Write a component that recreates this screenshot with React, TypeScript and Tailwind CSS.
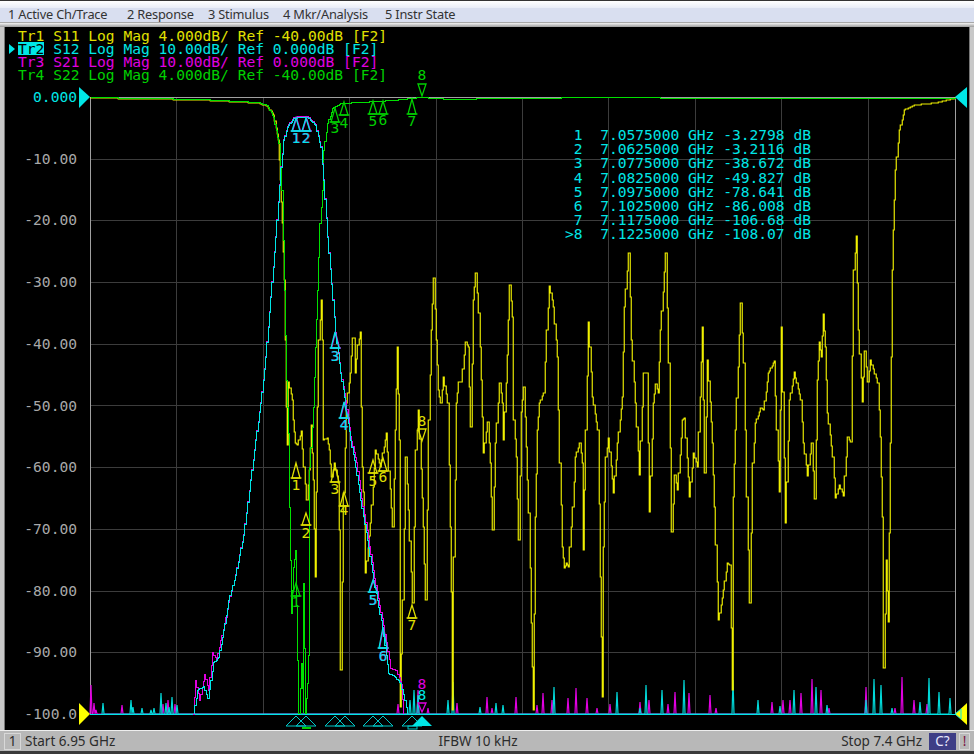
import React from "react";

type Pt = [number, number];

const GRID_X = [176, 263, 349, 436, 522, 608, 695, 781, 868];
const GRID_Y = [159, 220, 282, 344, 405, 467, 529, 591, 652];
const AXIS = ["0.000", "-10.00", "-20.00", "-30.00", "-40.00", "-50.00", "-60.00", "-70.00", "-80.00", "-90.00", "-100.0"];
const MENU = [
  { label: "1 Active Ch/Trace", cls: "w-[119px]" },
  { label: "2 Response", cls: "w-[81px]" },
  { label: "3 Stimulus", cls: "w-[75px]" },
  { label: "4 Mkr/Analysis", cls: "w-[102px]" },
  { label: "5 Instr State", cls: "w-[80px]" },
];

const LEGEND = [
  { text: "Tr1 S11 Log Mag 4.000dB/ Ref -40.00dB [F2]", cls: "text-[#e0e000]" },
  { text: "Tr2 S12 Log Mag 10.00dB/ Ref 0.000dB [F2]", cls: "text-[#00e6e6]", active: true },
  { text: "Tr3 S21 Log Mag 10.00dB/ Ref 0.000dB [F2]", cls: "text-[#e000e0]" },
  { text: "Tr4 S22 Log Mag 4.000dB/ Ref -40.00dB [F2]", cls: "text-[#00d000]" },
];

const TABLE = [
  " 1  7.0575000 GHz -3.2798 dB",
  " 2  7.0625000 GHz -3.2116 dB",
  " 3  7.0775000 GHz -38.672 dB",
  " 4  7.0825000 GHz -49.827 dB",
  " 5  7.0975000 GHz -78.641 dB",
  " 6  7.1025000 GHz -86.008 dB",
  " 7  7.1175000 GHz -106.68 dB",
  ">8  7.1225000 GHz -108.07 dB",
];

const S11: Pt[] = [
  [90, 98], [200, 100], [257, 103], [267, 106], [273, 115], [278, 140], [280, 180], [282, 223], [284, 280], [285, 340], [286, 407], [287, 445],
  [288, 382], [292, 400], [293, 420], [295, 443], [297, 445], [301, 431], [303, 467], [306, 500], [309, 470], [311, 425], [313, 480], [315, 577],
  [317, 407], [318, 340], [321, 300], [322, 340], [323, 407], [323, 440], [327, 438], [329, 450], [331, 477], [334, 463], [338, 483], [339, 530], [340, 670],
  [343, 493], [346, 403], [350, 373], [352, 338], [354, 338], [355, 373], [357, 345], [360, 332], [361, 407], [362, 467], [364, 517], [365, 573],
  [370, 523], [375, 450], [380, 467], [386, 433], [392, 527], [395, 430], [397, 347], [399, 440], [400, 533], [400, 707], [402, 600], [405, 457], [408, 510],
  [412, 603], [415, 450], [418, 410], [423, 527], [425, 600], [428, 420], [431, 330], [433, 278], [436, 340], [438, 390], [440, 403], [443, 377], [447, 403],
  [450, 527], [452, 657], [452, 710], [453, 557], [456, 403], [458, 382], [461, 382], [465, 342], [468, 347], [470, 427], [473, 300], [475, 273],
  [478, 313], [481, 380], [483, 453], [487, 422], [490, 463], [492, 530], [495, 443], [499, 383], [502, 403], [503, 440], [507, 355], [509, 285],
  [512, 317], [513, 420], [516, 457], [518, 540], [521, 412], [523, 387], [526, 447], [528, 513], [531, 623], [533, 710], [535, 517], [537, 430],
  [539, 403], [543, 393], [546, 330], [549, 286], [553, 307], [557, 357], [559, 463], [562, 547], [564, 568], [566, 563], [568, 567], [572, 507],
  [575, 457], [579, 443], [582, 463], [583, 550], [585, 430], [588, 322], [592, 397], [597, 430], [600, 577], [602, 697], [603, 547], [605, 457],
  [608, 438], [613, 493], [617, 443], [622, 397], [624, 307], [628, 253], [631, 340], [635, 403], [639, 475], [643, 373], [646, 373], [649, 512],
  [653, 403], [655, 384], [658, 393], [660, 330], [665, 253], [668, 363], [671, 532], [674, 475], [677, 490], [682, 420], [684, 418], [689, 497],
  [693, 453], [697, 467], [702, 327], [704, 473], [707, 360], [712, 443], [714, 507], [718, 620], [723, 590], [727, 563], [729, 565], [732, 690],
  [733, 497], [735, 430], [740, 303], [743, 363], [746, 497], [749, 603], [752, 463], [755, 423], [760, 408], [763, 410], [768, 373], [774, 361],
  [776, 430], [779, 492], [781, 327], [785, 523], [789, 400], [794, 372], [800, 400], [803, 443], [807, 476], [811, 443], [814, 499], [817, 380],
  [819, 342], [821, 357], [823, 314], [825, 347], [827, 413], [832, 457], [835, 498], [839, 485], [843, 496], [847, 437], [850, 442], [853, 270],
  [856, 236], [858, 330], [862, 402], [864, 351], [867, 382], [870, 360], [877, 383], [880, 437], [882, 517], [883, 668], [886, 560], [888, 622],
  [890, 443], [892, 270], [893, 230], [895, 170], [899, 130], [904, 110], [914, 105], [935, 103], [955, 98],
];

const S22: Pt[] = [
  [90, 97], [200, 99], [257, 102], [267, 105], [273, 117], [278, 143], [281, 190], [284, 290], [286, 380], [288, 433], [289, 507], [291, 613], [293, 567], [295, 550],
  [297, 660], [298, 713], [301, 663], [303, 713], [303, 583], [305, 713], [307, 683], [309, 627], [309, 467], [313, 407], [315, 347], [317, 290],
  [319, 223], [322, 190], [323, 150], [327, 123], [332, 108], [340, 103], [360, 102], [393, 100], [420, 97], [450, 99], [500, 98], [620, 97], [700, 98], [955, 98],
];

const S12: Pt[] = [
  [193, 713], [197, 690], [203, 686], [207, 698], [210, 680], [213, 662], [218, 657], [223, 630], [228, 600], [235, 575], [243, 535], [250, 480], [255, 440],
  [260, 403], [265, 357], [270, 297], [275, 237], [280, 167], [283, 140], [287, 127], [293, 118], [300, 117], [307, 117], [315, 125], [320, 147], [323, 180],
  [327, 237], [332, 300], [335, 333], [340, 373], [345, 405], [350, 440], [355, 467], [360, 500], [367, 540], [373, 580], [382, 627], [388, 673], [394, 676],
  [400, 683], [404, 700], [407, 714],
];

const S21: Pt[] = [
  [192, 714], [195, 680], [199, 700], [204, 674], [208, 690], [212, 652], [216, 660], [220, 640], [224, 624], [228, 602], [235, 574], [243, 534], [250, 479], [255, 439],
  [260, 402], [265, 356], [270, 296], [275, 236], [280, 166], [283, 139], [287, 126], [293, 117], [300, 116], [307, 116], [315, 124], [320, 146], [323, 179],
  [327, 236], [332, 299], [335, 332], [340, 372], [345, 400], [350, 436], [356, 462], [361, 498], [368, 538], [374, 578], [383, 625], [390, 668], [396, 670],
  [401, 684], [403, 714],
];

const CYAN_SPIKES: Pt[] = [
  [103, 703], [131, 700], [133, 707], [142, 708], [151, 710], [154, 708], [161, 693], [166, 703], [169, 707], [172, 697], [177, 705], [410, 700], [414, 690], [418, 695],
  [448, 700], [453, 682], [480, 707], [496, 703], [503, 705], [554, 687], [617, 692], [640, 708], [646, 685], [662, 690], [684, 680], [733, 680], [758, 700], [780, 706],
  [794, 690], [816, 687], [827, 705], [866, 700], [874, 679], [881, 685], [892, 708], [920, 702], [929, 678], [939, 692], [950, 698],
];

const MAGENTA_SPIKES: Pt[] = [
  [91, 685], [94, 703], [96, 710], [122, 705], [163, 704], [168, 700], [175, 704], [398, 704], [418, 690], [428, 708], [457, 703], [487, 697], [492, 708], [516, 697], [537, 705],
  [543, 693], [552, 700], [568, 698], [576, 688], [587, 698], [597, 708], [610, 704], [640, 702], [649, 700], [668, 704], [675, 692], [689, 693], [710, 695], [716, 708],
  [772, 702], [783, 700], [790, 700], [801, 693], [812, 679], [821, 690], [829, 708], [866, 687], [895, 708], [902, 677], [914, 700], [927, 704],
];

function pts(list: Pt[]) {
  return list.map(([x, y]) => `${x},${y}`).join(" ");
}

// the analyzer draws its traces as pixel stairs, not as smooth lines
function stairs(list: Pt[], dx = 1.3, offset = 0.5) {
  const out: Pt[] = [[list[0][0] + offset, list[0][1]]];
  for (let i = 1; i < list.length; i++) {
    const [ax, ay] = list[i - 1];
    const [bx, by] = list[i];
    const n = Math.max(1, Math.round((bx - ax) / dx));
    let prevY = ay;
    for (let k = 1; k <= n; k++) {
      const x = Math.round(ax + ((bx - ax) * k) / n) + offset;
      const y = Math.round(ay + ((by - ay) * k) / n);
      out.push([x, prevY], [x, y]);
      prevY = y;
    }
  }
  return pts(out);
}

function spikes(list: Pt[]) {
  const out: Pt[] = [];
  list.forEach(([x, y]) => out.push([x - 1, 714], [x, y], [x + 1, 714]));
  return pts(out);
}

type MarkerProps = { x: number; tip: number; base: number; label: string; labelY: number; color: string; labelColor?: string };

function Marker({ x, tip, base, label, labelY, color, labelColor }: MarkerProps) {
  return (
    <g>
      <polygon points={`${x},${tip} ${x - 4},${base} ${x + 4},${base}`} fill="none" stroke={color} strokeWidth={1.3} />
      <line x1={x - 5.5} x2={x + 5.5} y1={base} y2={base} stroke={color} strokeWidth={1.3} />
      <text x={x} y={labelY} textAnchor="middle" fill={labelColor ?? color}>
        {label}
      </text>
    </g>
  );
}

const GREEN = "#00d000";
const YELLOW = "#e0e000";
const CYAN = "#00e6e6";
const MAGENTA = "#e000e0";

const GREEN_MARKS = [
  { x: 335, tip: 108, base: 122, label: "3", labelY: 133 },
  { x: 344, tip: 102, base: 115, label: "4", labelY: 128 },
  { x: 373, tip: 101, base: 114, label: "5", labelY: 126 },
  { x: 383, tip: 101, base: 114, label: "6", labelY: 125 },
  { x: 412, tip: 99, base: 114, label: "7", labelY: 126 },
  { x: 296, tip: 583, base: 596, label: "1", labelY: 607 },
];

const YELLOW_MARKS = [
  { x: 296, tip: 463, base: 478, label: "1", labelY: 490 },
  { x: 306, tip: 513, base: 525, label: "2", labelY: 538 },
  { x: 335, tip: 465, base: 482, label: "3", labelY: 494 },
  { x: 344, tip: 492, base: 506, label: "4", labelY: 515 },
  { x: 373, tip: 460, base: 473, label: "5", labelY: 486 },
  { x: 383, tip: 458, base: 471, label: "6", labelY: 482 },
  { x: 412, tip: 605, base: 618, label: "7", labelY: 630 },
];

const CYAN_MARKS = [
  { x: 296, tip: 118, base: 131, label: "1", labelY: 143 },
  { x: 306, tip: 118, base: 131, label: "2", labelY: 143 },
  { x: 335, tip: 332, base: 348, label: "3", labelY: 361 },
  { x: 344, tip: 402, base: 418, label: "4", labelY: 430 },
  { x: 373, tip: 580, base: 592, label: "5", labelY: 605 },
  { x: 383, tip: 627, base: 648, label: "6", labelY: 661 },
];

function Plot() {
  return (
    <svg
      viewBox="5 81 965 649"
      className="block w-[965px] h-[649px] overflow-visible font-['DejaVu_Sans_Mono',monospace] text-[14.6px]"
    >
      <g stroke="#3c3c3c" shapeRendering="crispEdges">
        {GRID_X.map((x) => (
          <line key={x} x1={x} x2={x} y1={97} y2={714} />
        ))}
        {GRID_Y.map((y) => (
          <line key={y} x1={90} x2={955} y1={y} y2={y} />
        ))}
      </g>
      <g fill="none" stroke="#a0a0a0" shapeRendering="crispEdges">
        <rect x={90} y={97} width={865} height={617} />
      </g>

      {AXIS.map((label, i) => (
        <text key={label} x={77} y={102 + i * 61.7} textAnchor="end" fill={i === 0 ? CYAN : "#a8a8a8"}>
          {label}
        </text>
      ))}

      <polyline points={spikes(MAGENTA_SPIKES)} fill="none" stroke={MAGENTA} strokeWidth={1.2} />
      <polyline points={spikes(CYAN_SPIKES)} fill="none" stroke="#00d8d8" strokeWidth={1.2} />
      <line x1={90} x2={955} y1={714} y2={714} stroke={CYAN} shapeRendering="crispEdges" />

      <polyline points={stairs(S11, 1.3, 0.25)} fill="none" stroke="#f0f000" strokeWidth={1.15} />
      <polyline points={stairs(S22)} fill="none" stroke="#00e000" shapeRendering="crispEdges" />
      <polyline points={stairs(S21)} fill="none" stroke={MAGENTA} shapeRendering="crispEdges" />
      <polyline points={stairs(S12)} fill="none" stroke={CYAN} shapeRendering="crispEdges" />

      {/* data markers */}
      {YELLOW_MARKS.map((m) => (
        <Marker key={`y${m.label}`} {...m} color={YELLOW} />
      ))}
      {GREEN_MARKS.map((m) => (
        <Marker key={`g${m.label}`} {...m} color={GREEN} />
      ))}
      {CYAN_MARKS.map((m) => (
        <g key={`m${m.label}`}>
          <Marker {...m} x={m.x + 0.5} color={MAGENTA} />
          <Marker {...m} color={CYAN} />
        </g>
      ))}

      {/* marker 8 points down */}
      <text x={422} y={80} textAnchor="middle" fill={GREEN}>8</text>
      <polygon points="422,96 418,84 426,84" fill="none" stroke={GREEN} strokeWidth={1.3} />
      <text x={422} y={426} textAnchor="middle" fill={YELLOW}>8</text>
      <polygon points="422,441 418,429 426,429" fill="none" stroke={YELLOW} strokeWidth={1.3} />
      <text x={422} y={689} textAnchor="middle" fill={MAGENTA}>8</text>
      <text x={422} y={700} textAnchor="middle" fill={CYAN}>8</text>
      <polygon points="422,712 418,703 426,703" fill="none" stroke={MAGENTA} strokeWidth={1.3} />

      {/* off scale markers under the graticule */}
      <g fill="none" stroke="#00c8c8">
        {[296, 306, 335, 345, 373, 383, 412].map((x) => (
          <polygon key={x} points={`${x},716 ${x - 10},726 ${x + 10},726`} />
        ))}
        <rect x={408} y={726} width={9} height={3} />
      </g>
      <rect x={302} y={727} width={9} height={2} fill={GREEN} />
      <polygon points="422,716 412,726 432,726" fill={CYAN} />

      {/* reference position arrows */}
      <polygon points="79,87 90,97 79,108" fill={CYAN} />
      <polygon points="967,87 955,97 967,108" fill={CYAN} />
      <polygon points="79,703 90,714 79,725" fill="#ffff00" />
      <polygon points="967,703 955,714 967,725" fill="#ffff00" />
      <polygon points="961,709 955,714 961,719" fill="none" stroke={CYAN} />

      {/* marker table */}
      {TABLE.map((row, i) => (
        <text key={row} x={565} y={140 + i * 14.2} fill={CYAN} className="whitespace-pre">
          {row}
        </text>
      ))}
    </svg>
  );
}

export default function App() {
  return (
    <div className="flex h-[754px] w-[974px] flex-col overflow-hidden bg-[#c8c8c8] font-['Noto_Sans',sans-serif] text-[#333]">
      <div className="h-[8px] border-t border-[#333] bg-gradient-to-b from-white to-[#e9edf7]" />
      <div className="flex h-[14px] items-center bg-[#d9dff0] pl-[8px] text-[12.8px] tracking-[-0.2px]">
        {MENU.map((item) => (
          <span key={item.label} className={`${item.cls} whitespace-nowrap`}>
            {item.label}
          </span>
        ))}
      </div>
      <div className="h-[5px] border-t border-[#a8a8a8] bg-gradient-to-b from-[#f4f4f4] to-[#9c9c9c]" />

      <div className="mx-[4px] flex flex-1 flex-col border-l border-r border-[#777] bg-black">
        <div className="flex h-[54px] flex-col pl-[13px] pt-[2px] font-['DejaVu_Sans_Mono',monospace] text-[14.6px] leading-[13px] whitespace-pre">
          {LEGEND.map((row) => {
            const code = row.text.slice(0, 3);
            const rest = row.text.slice(3);
            return (
              <div key={code} className={`relative h-[13px] ${row.cls}`}>
                {row.active ? (
                  <>
                    <span className="absolute left-[-9px] top-[2px] h-0 w-0 border-y-[5px] border-l-[6px] border-y-transparent border-l-[#00e6e6]" />
                    <span className="inline-block h-[13px] bg-[#00e6e6] align-top text-black">{code}</span>
                  </>
                ) : (
                  <span>{code}</span>
                )}
                {rest}
              </div>
            );
          })}
        </div>
        <Plot />
      </div>

      <div className="flex h-[21px] items-center border-t border-[#eee] bg-[#b8b8b8] pl-[4px] pr-[4px] text-[13.5px] text-[#2c2c2c]">
        <span className="flex h-[17px] w-[17px] items-center justify-center border border-[#d8d8d8]">1</span>
        <span className="ml-[4px] w-[414px]">Start 6.95 GHz</span>
        <span className="w-[403px]">IFBW 10 kHz</span>
        <span className="w-[88px]">Stop 7.4 GHz</span>
        <span className="flex h-[17px] w-[27px] items-center justify-center bg-[#3e3e86] text-[#e8e8ff]">C?</span>
        <span className="ml-[3px] flex h-[17px] w-[11px] items-center justify-center border border-[#d8d8d8] text-[#7a1040]">!</span>
      </div>
      <div className="h-[3px] bg-[#3a3a3a]" />
    </div>
  );
}
